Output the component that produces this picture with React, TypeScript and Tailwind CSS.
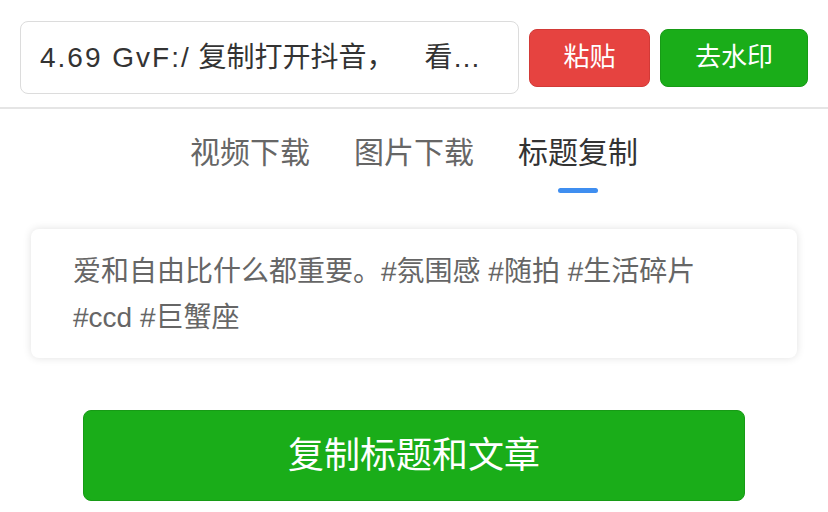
import React from "react";

export default function App() {
  const tabs = ["视频下载", "图片下载", "标题复制"];
  const active = 2;
  return (
    <div
      className="w-[828px] h-[512px] bg-white overflow-hidden"
      style={{ fontFamily: '"Liberation Sans", "Noto Sans CJK SC", sans-serif' }}
    >
      <div className="flex items-center px-[20px] pt-[21px] pb-[13px] gap-[10px]">
        <div className="w-[499px] h-[73px] border border-[#dcdcdc] rounded-[8px] pl-[19px] pr-[28px] flex items-center min-w-0">
          <div className="truncate text-[28px] text-[#333] leading-[40px]">
            <span className="tracking-[2px]">4.69 GvF:/</span> 复制打开抖音<span className="mr-[16px]">，　</span>看看【生活碎片的作品】爱和自由比什么都重要。#氛围感 #随拍
          </div>
        </div>
        <button className="w-[121px] h-[58px] bg-[#e64340] border border-[#d23a37] rounded-[8px] text-white text-[26px] flex items-center justify-center">
          粘贴
        </button>
        <button className="w-[148px] h-[58px] bg-[#1aad19] border border-[#179b16] rounded-[8px] text-white text-[26px] flex items-center justify-center">
          去水印
        </button>
      </div>
      <div className="h-[2px] bg-[#e5e5e5]" />
      <div className="flex justify-center gap-[44px] mt-[24px]">
        {tabs.map((t, i) => (
          <div key={t} className="flex flex-col items-center">
            <div
              className={
                "text-[30px] leading-[40px] " +
                (i === active ? "text-[#333]" : "text-[#666]")
              }
            >
              {t}
            </div>
            <div
              className={
                "mt-[15px] w-[40px] h-[5px] rounded-full " +
                (i === active ? "bg-[#3f8ef0]" : "bg-transparent")
              }
            />
          </div>
        ))}
      </div>
      <div className="mx-[31px] mt-[36px] h-[129px] bg-white rounded-[8px] shadow-[0_0_8px_rgba(0,0,0,0.12)] pl-[42px] pr-[30px] pt-[20px]">
        <div className="text-[28px] leading-[46px] text-[#666]">
          爱和自由比什么都重要。#氛围感 #随拍 #生活碎片
          <br />
          #ccd #巨蟹座
        </div>
      </div>
      <div className="mx-[83px] mt-[52px] h-[91px] bg-[#1aad19] border border-[#179b16] rounded-[8px] flex items-center justify-center">
        <span className="text-white text-[36px]">复制标题和文章</span>
      </div>
    </div>
  );
}
